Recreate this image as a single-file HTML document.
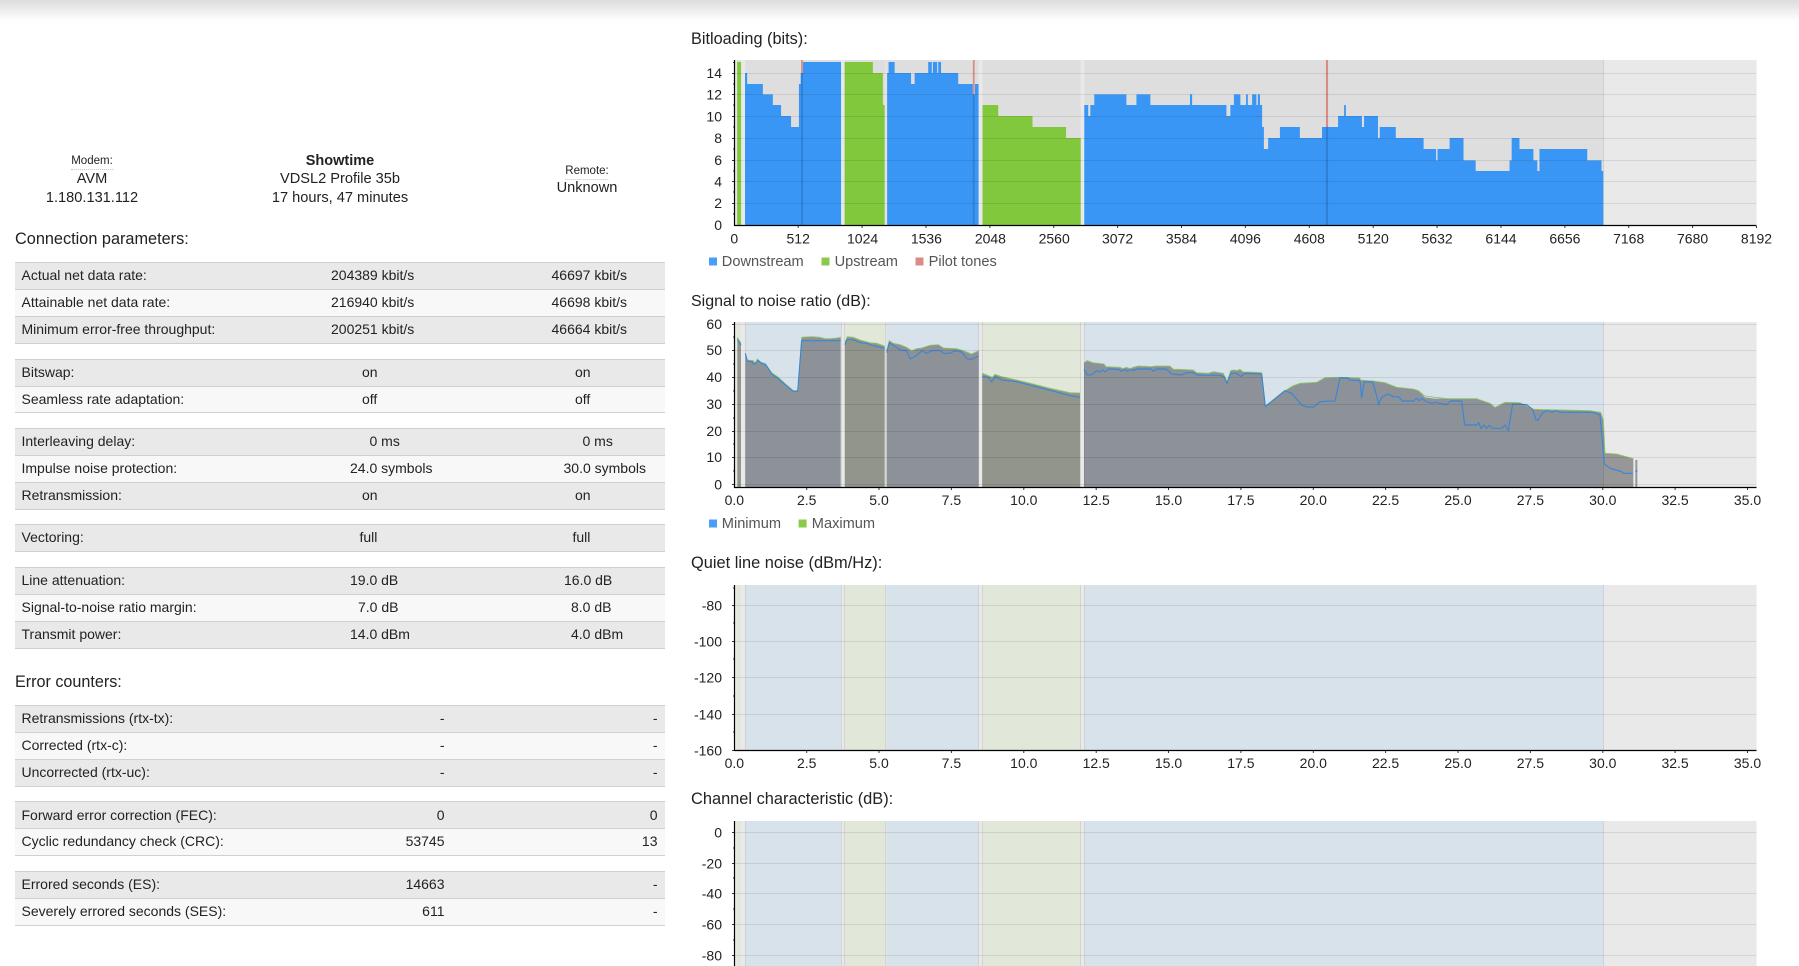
<!DOCTYPE html>
<html><head><meta charset="utf-8"><title>DSL</title>
<style>
html,body{margin:0;padding:0;background:#fff;width:1799px;height:966px;overflow:hidden}
body{position:relative;font-family:"Liberation Sans",sans-serif;color:#222;font-size:14px}
#top{position:absolute;left:0;top:0;width:1799px;height:21px;background:linear-gradient(#dcdcdc,#ffffff)}
.t{position:absolute;white-space:nowrap;transform:translateX(-50%);line-height:18px}
.h{position:absolute;left:15px;font-size:16.3px;line-height:20px;white-space:nowrap}
.r{position:absolute;left:15px;width:650px;height:28px;box-sizing:border-box;border-top:1px solid #d0d0d0;border-bottom:1px solid #d0d0d0;line-height:25px;background:#f8f8f8}
.o{background:#e9e9e9}
.r span{position:absolute;top:0;white-space:nowrap}
.r .a{left:6.5px}
.p{right:220.5px}.q{right:7.5px}
svg{position:absolute;left:0;top:0}
svg text{font-family:"Liberation Sans",sans-serif;font-size:14px;fill:#222}
.l text{font-size:14.6px;fill:#555}
.m{text-anchor:middle}.e{text-anchor:end}
.mx{fill:none;stroke:#8ec663;stroke-width:2.6}
.mn{fill:none;stroke:#3a86d6;stroke-width:3.4}
</style></head><body>
<div id="top"></div>
<div class="t" style="left:92px;top:154px;font-size:11.5px;border-bottom:1px dotted #c4c4c4;line-height:15px">Modem:</div>
<div class="t" style="left:92px;top:170px;font-size:14.6px">AVM</div>
<div class="t" style="left:92px;top:189px;font-size:14.6px">1.180.131.112</div>
<div class="t" style="left:340px;top:152px;font-size:14.5px;font-weight:bold">Showtime</div>
<div class="t" style="left:340px;top:170px;font-size:14.6px">VDSL2 Profile 35b</div>
<div class="t" style="left:340px;top:189px;font-size:14.6px">17 hours, 47 minutes</div>
<div class="t" style="left:587px;top:164px;font-size:11.5px;border-bottom:1px dotted #c4c4c4;line-height:15px">Remote:</div>
<div class="t" style="left:587px;top:179px;font-size:14.6px">Unknown</div>
<div class="h" style="top:229px">Connection parameters:</div>

<div class="r o" style="top:262px"><span class="a">Actual net data rate:</span><span style="left:316px">204389 kbit/s</span><span style="left:536.5px">46697 kbit/s</span></div>
<div class="r" style="top:289px"><span class="a">Attainable net data rate:</span><span style="left:316px">216940 kbit/s</span><span style="left:536.5px">46698 kbit/s</span></div>
<div class="r o" style="top:316px"><span class="a">Minimum error-free throughput:</span><span style="left:316px">200251 kbit/s</span><span style="left:536.5px">46664 kbit/s</span></div>

<div class="r o" style="top:359px"><span class="a">Bitswap:</span><span style="left:347px">on</span><span style="left:560px">on</span></div>
<div class="r" style="top:386px;height:27px"><span class="a">Seamless rate adaptation:</span><span style="left:347px">off</span><span style="left:560px">off</span></div>

<div class="r o" style="top:428px"><span class="a">Interleaving delay:</span><span style="left:354.5px">0 ms</span><span style="left:567.5px">0 ms</span></div>
<div class="r" style="top:455px"><span class="a">Impulse noise protection:</span><span style="left:335px">24.0 symbols</span><span style="left:548.5px">30.0 symbols</span></div>
<div class="r o" style="top:482px"><span class="a">Retransmission:</span><span style="left:347px">on</span><span style="left:560px">on</span></div>

<div class="r o" style="top:524px"><span class="a">Vectoring:</span><span style="left:344.5px">full</span><span style="left:557.5px">full</span></div>

<div class="r o" style="top:567px"><span class="a">Line attenuation:</span><span style="left:335px">19.0 dB</span><span style="left:549px">16.0 dB</span></div>
<div class="r" style="top:594px"><span class="a">Signal-to-noise ratio margin:</span><span style="left:343px">7.0 dB</span><span style="left:556px">8.0 dB</span></div>
<div class="r o" style="top:621px"><span class="a">Transmit power:</span><span style="left:335px">14.0 dBm</span><span style="left:556px">4.0 dBm</span></div>

<div class="h" style="top:672px;font-size:16.15px">Error counters:</div>

<div class="r o" style="top:705px"><span class="a">Retransmissions (rtx-tx):</span><span class="p">-</span><span class="q">-</span></div>
<div class="r" style="top:732px"><span class="a">Corrected (rtx-c):</span><span class="p">-</span><span class="q">-</span></div>
<div class="r o" style="top:759px"><span class="a">Uncorrected (rtx-uc):</span><span class="p">-</span><span class="q">-</span></div>

<div class="r o" style="top:801px;line-height:26px"><span class="a">Forward error correction (FEC):</span><span class="p">0</span><span class="q">0</span></div>
<div class="r" style="top:828px"><span class="a">Cyclic redundancy check (CRC):</span><span class="p">53745</span><span class="q">13</span></div>

<div class="r o" style="top:871px"><span class="a">Errored seconds (ES):</span><span class="p">14663</span><span class="q">-</span></div>
<div class="r" style="top:898px"><span class="a">Severely errored seconds (SES):</span><span class="p">611</span><span class="q">-</span></div>

<svg width="1799" height="966" viewBox="0 0 1799 966" xmlns="http://www.w3.org/2000/svg">
<defs>
<g id="bands">
<rect x="737.1" y="0" width="3.6" height="1" fill="#e1e7d9"/>
<rect x="745.4" y="0" width="95.7" height="1" fill="#d8e2eb"/>
<rect x="844.3" y="0" width="41.1" height="1" fill="#e1e7d9"/>
<rect x="886.4" y="0" width="92.2" height="1" fill="#d8e2eb"/>
<rect x="982.5" y="0" width="98.2" height="1" fill="#e1e7d9"/>
<rect x="1084.3" y="0" width="519.3" height="1" fill="#d8e2eb"/>
<g fill="#000" fill-opacity=".08">
<rect x="745" y="0" width="1" height="1"/><rect x="841" y="0" width="1" height="1"/><rect x="844" y="0" width="1" height="1"/><rect x="885" y="0" width="1" height="1"/><rect x="978" y="0" width="1" height="1"/><rect x="982" y="0" width="1" height="1"/><rect x="1080" y="0" width="1" height="1"/><rect x="1084" y="0" width="1" height="1"/><rect x="1603" y="0" width="1" height="1"/>
</g>
</g>
<g id="grey">
<rect x="737.1" y="0" width="3.6" height="1"/>
<rect x="745.4" y="0" width="95.7" height="1"/>
<rect x="844.3" y="0" width="41.1" height="1"/>
<rect x="886.4" y="0" width="92.2" height="1"/>
<rect x="982.5" y="0" width="98.2" height="1"/>
<rect x="1084.3" y="0" width="519.3" height="1"/>
</g>
</defs>

<!-- BITLOADING -->
<text x="691" y="44" style="font-size:16.3px">Bitloading (bits):</text>
<rect x="734" y="60" width="1022.6" height="165" fill="#e9e9e9"/>
<use href="#grey" transform="translate(0,60) scale(1,165)" fill="#dedede"/>
<rect x="1603" y="60" width="1" height="165" fill="#d0d0d0"/>
<g transform="translate(680,0) scale(.35714,.33333)" fill="#3a96f5">
<path fill="#82c83c" d="M160,676V186H171V676Z"/>
<path d="M182,676V219H188V252H232V283H260V315H283V348H311V381H333V252H338V219H344V186H451V676Z"/>
<path fill="#82c83c" d="M461,676V186H540V219H568V315H573V676Z"/>
<path d="M580,676V219H584V186H601V219H647V252H657V219H695V186H705V219H708V186H720V219H723V186H731V219H779V252H820V283H826V252H836V676Z"/>
<path fill="#82c83c" d="M847,676V315H891V348H987V381H1081V414H1122V676Z"/>
<path d="M1132,676V315H1143V348H1149V315H1160V283H1250V315H1278V283H1317V315H1428V283H1434V315H1530V348H1541V315H1551V283H1569V676Z"/>
<rect x="339" y="180" width="5" height="39" fill="#d98c85"/>
<rect x="339" y="219" width="5" height="457" fill="#2f7fd6"/>
<rect x="820" y="180" width="5" height="103" fill="#d98c85"/>
<rect x="820" y="283" width="5" height="393" fill="#2f7fd6"/>
</g>
<g transform="translate(1240,0) scale(.35651,.33333)" fill="#3a96f5">
<path d="M-1,676V315H17V283H22V315H34V283H46V315H50V283H56V315H62V381H67V447H79V414H112V381H168V414H230V381H275V348H292V315H297V348H342V381H348V348H387V414H392V381H437V414H515V447H550V481H554V447H588V414H627V481H661V513H756V481H762V414H784V447H823V481H834V513H840V447H974V481H1014V513H1019V676Z"/>
<rect x="241" y="180" width="6" height="201" fill="#d98c85"/>
<rect x="241" y="381" width="6" height="295" fill="#2f7fd6"/>
</g>
<g stroke="#000" stroke-opacity=".09" stroke-width="1">
<path d="M734 73.5H1756.5M734 94.5H1756.5M734 116.5H1756.5M734 138.5H1756.5M734 160.5H1756.5M734 181.5H1756.5M734 203.5H1756.5"/>
</g>
<path d="M734.5 60V226M734 225.5H1756.5" stroke="#000" stroke-width="1.2" fill="none"/>
<path stroke="#333" fill="none" d="M732 73.5h2M732 94.5h2M732 116.5h2M732 138.5h2M732 160.5h2M732 181.5h2M732 203.5h2M733 62.5h1M733 84h1M733 105h1M733 127h1M733 149h1M733 171h1M733 192h1M733 214h1M798.2 226v2M862.1 226v2M926 226v2M989.9 226v2M1053.7 226v2M1117.6 226v2M1181.5 226v2M1245.4 226v2M1309.3 226v2M1373.2 226v2M1437.1 226v2M1501 226v2M1564.9 226v2M1628.7 226v2M1692.6 226v2M1756.5 226v2"/>
<text class="e" x="722" y="78">14</text><text class="e" x="722" y="99.5">12</text><text class="e" x="722" y="121.5">10</text><text class="e" x="722" y="143">8</text><text class="e" x="722" y="165">6</text><text class="e" x="722" y="186.5">4</text><text class="e" x="722" y="208">2</text><text class="e" x="722" y="230">0</text>
<text class="m" x="734.3" y="243.5">0</text><text class="m" x="798.2" y="243.5">512</text><text class="m" x="862.6" y="243.5">1024</text><text class="m" x="926.4" y="243.5">1536</text><text class="m" x="990.4" y="243.5">2048</text><text class="m" x="1054.2" y="243.5">2560</text><text class="m" x="1117.6" y="243.5">3072</text><text class="m" x="1181.5" y="243.5">3584</text><text class="m" x="1245.4" y="243.5">4096</text><text class="m" x="1309.3" y="243.5">4608</text><text class="m" x="1373.2" y="243.5">5120</text><text class="m" x="1437.1" y="243.5">5632</text><text class="m" x="1501" y="243.5">6144</text><text class="m" x="1564.9" y="243.5">6656</text><text class="m" x="1628.7" y="243.5">7168</text><text class="m" x="1692.6" y="243.5">7680</text><text class="m" x="1756.5" y="243.5">8192</text>
<g class="l">
<rect x="709" y="257.5" width="8" height="8" fill="#4a9ff5"/><text x="721.8" y="266">Downstream</text>
<rect x="821.5" y="257.5" width="8" height="8" fill="#8cc84b"/><text x="834.6" y="266">Upstream</text>
<rect x="915.5" y="257.5" width="8" height="8" fill="#d98c85"/><text x="928.6" y="266">Pilot tones</text>
</g>

<!-- SNR -->
<text x="691" y="306" style="font-size:16px">Signal to noise ratio (dB):</text>
<rect x="734" y="322" width="1022.6" height="165.3" fill="#e9e9e9"/>
<use href="#bands" transform="translate(0,322) scale(1,165.3)"/>
<g opacity=".35" fill="#000">
<g transform="translate(730,330) scale(.33333)">
<path d="M22,472V22L33,40V472Z"/>
<path d="M46,472V70L52,90L70,92L75,100L82,87L92,97L105,100L125,128L145,142L170,165L190,182L204,182L215,22L245,20L270,22L285,26L300,26L320,24L332,22V472Z"/>
<path d="M345,472V36L352,20L370,22L390,30L420,38L440,40L464,48V472Z"/>
<path d="M470,472V62L478,32L490,40L510,44L530,52L545,62L560,56L575,54L600,46L625,44L640,54L680,56L700,62L725,72L746,62V472Z"/>
<path d="M757,472V130L775,137L787,142L795,133L815,140L860,150L910,162L960,175L1020,188L1050,189V472Z"/>
</g>
<g transform="translate(1080,350) scale(.33333)">
<path d="M12,412V38L22,32L38,38L72,42L78,50L120,52L128,56L140,52L150,56L160,52L175,48L215,50L225,48L270,48L280,58L300,58L340,60L350,68L385,70L400,65L430,70L437,85L442,95L452,62L462,60L470,62L480,58L490,66L510,66L545,68L556,168L610,125L640,107L660,100L710,97L735,83L780,82L841,84V412Z"/>
</g>
<g transform="translate(1360,370) scale(.33333)">
<path d="M0,352V30L40,33L75,38L110,52L160,57L175,62L195,82L225,86L265,86L350,86L390,100L405,112L435,97L480,98L520,118L690,122L722,127L730,150L735,250L770,252L820,266V352Z"/>
<path d="M826,352V270H832V352Z"/>
</g>
</g>
<g transform="translate(730,330) scale(.33333)">
<path class="mx" d="M22,22L33,40M46,70L52,90L70,92L75,100L82,87L92,97L105,100L125,128L145,142L170,165L190,182L204,182L215,22L245,20L270,22L285,26L300,26L320,24L332,22M345,36L352,20L370,22L390,30L420,38L440,40L464,48M470,62L478,32L490,40L510,44L530,52L545,62L560,56L575,54L600,46L625,44L640,54L680,56L700,62L725,72L746,62M757,130L775,137L787,142L795,133L815,140L860,150L910,162L960,175L1020,188L1050,189"/>
<path class="mn" d="M22,28L33,45M46,70L52,93L65,95L73,103L85,92L95,100L108,105L125,132L145,146L170,168L190,184L203,184L215,32H332M345,44L352,28L375,31L390,38L410,40L430,47L445,50L464,56M470,68L478,38L490,46L510,60L530,62L541,87L560,76L575,62L590,70L605,62L630,62L642,70L660,70L675,62L695,66L712,87L725,88L746,78M757,139L775,142L785,156L795,140L815,150L860,155L910,168L960,181L1020,197L1050,202"/>
</g>
<g transform="translate(1080,350) scale(.33333)">
<path class="mx" d="M12,38L22,32L38,38L72,42L78,50L120,52L128,56L140,52L150,56L160,52L175,48L215,50L225,48L270,48L280,58L300,58L340,60L350,68L385,70L400,65L430,70L437,85L442,95L452,62L462,60L470,62L480,58L490,66L510,66L545,68L556,168L610,125L640,107L660,100L710,97L735,83L780,82L841,84"/>
<path class="mn" d="M12,58L22,75L35,74L50,62L60,66L68,60L75,66L85,57L115,58L124,64L135,58L142,64L155,58L160,62L170,57L212,57L220,64L230,57L258,57L275,72L305,75L320,68L340,68L355,76L420,76L432,80L441,100L452,70L470,70L482,80L495,70L545,72L556,170L615,122L635,130L665,165L680,171L700,171L712,162L720,155L735,154L765,153L780,84L805,84L808,90L841,92"/>
</g>
<g transform="translate(1360,370) scale(.33333)">
<path class="mx" d="M0,30L40,33L75,38L110,52L160,57L175,62L195,78L225,82L265,86L350,86L390,100L405,112L435,97L480,98L520,118L690,122L722,127L730,150L735,250L770,252L820,266"/>
<path class="mn" d="M0,32L5,85L12,36L38,36L48,70L56,103L65,82L85,72L100,80L115,80L128,93L160,93L170,85L178,92L186,85L200,95L215,100L225,97L260,104L272,93L305,93L314,165L350,165L356,158L363,175L372,165L380,175L388,166L398,175L425,175L435,165L445,182L458,102L500,104L518,118L528,150L535,150L548,127L565,122L575,127L590,122L600,127L700,127L720,135L733,282L750,295L785,305L790,310L818,310M826,303H832"/>
</g>
<path stroke="#000" stroke-opacity=".09" fill="none" d="M734 324.5H1756.5M734 350.5H1756.5M734 377.5H1756.5M734 404.5H1756.5M734 431.5H1756.5M734 457.5H1756.5M734 484.5H1756.5"/>
<path d="M734.5 322V488M734 487.5H1756.5" stroke="#000" stroke-width="1.2" fill="none"/>
<path stroke="#333" fill="none" d="M732 324.5h2M732 350.5h2M732 377.5h2M732 404.5h2M732 431.5h2M732 457.5h2M732 484.5h2M733 337h1M733 364h1M733 391h1M733 418h1M733 444h1M733 471h1M806.7 488v2M879 488v2M951.4 488v2M1023.8 488v2M1096.2 488v2M1168.5 488v2M1240.9 488v2M1313.3 488v2M1385.6 488v2M1458 488v2M1530.4 488v2M1602.8 488v2M1675.1 488v2M1747.5 488v2"/>
<text class="e" x="722" y="329">60</text><text class="e" x="722" y="355">50</text><text class="e" x="722" y="382">40</text><text class="e" x="722" y="409">30</text><text class="e" x="722" y="436">20</text><text class="e" x="722" y="462">10</text><text class="e" x="722" y="489.5">0</text>
<text class="m" x="734.3" y="505">0.0</text><text class="m" x="806.7" y="505">2.5</text><text class="m" x="879" y="505">5.0</text><text class="m" x="951.4" y="505">7.5</text><text class="m" x="1023.8" y="505">10.0</text><text class="m" x="1096.2" y="505">12.5</text><text class="m" x="1168.5" y="505">15.0</text><text class="m" x="1240.9" y="505">17.5</text><text class="m" x="1313.3" y="505">20.0</text><text class="m" x="1385.6" y="505">22.5</text><text class="m" x="1458" y="505">25.0</text><text class="m" x="1530.4" y="505">27.5</text><text class="m" x="1602.8" y="505">30.0</text><text class="m" x="1675.1" y="505">32.5</text><text class="m" x="1747.5" y="505">35.0</text>
<g class="l">
<rect x="709" y="519.5" width="8" height="8" fill="#4a9ff5"/><text x="721.8" y="528">Minimum</text>
<rect x="798.6" y="519.5" width="8" height="8" fill="#8cc84b"/><text x="811.8" y="528">Maximum</text>
</g>

<!-- QLN -->
<text x="691" y="568" style="font-size:16.4px">Quiet line noise (dBm/Hz):</text>
<rect x="734" y="585" width="1022.6" height="165.3" fill="#e9e9e9"/>
<use href="#bands" transform="translate(0,585) scale(1,165.3)"/>
<path stroke="#000" stroke-opacity=".09" fill="none" d="M734 605.5H1756.5M734 641.5H1756.5M734 677.5H1756.5M734 714.5H1756.5"/>
<path d="M734.5 585V751M734 750.5H1756.5" stroke="#000" stroke-width="1.2" fill="none"/>
<path stroke="#333" fill="none" d="M732 605.5h2M732 641.5h2M732 677.5h2M732 714.5h2M732 750.5h2M733 623h1M733 659h1M733 696h1M733 732h1M733 588h1M806.7 751v2M879 751v2M951.4 751v2M1023.8 751v2M1096.2 751v2M1168.5 751v2M1240.9 751v2M1313.3 751v2M1385.6 751v2M1458 751v2M1530.4 751v2M1602.8 751v2M1675.1 751v2M1747.5 751v2"/>
<text class="e" x="722" y="610.5">-80</text><text class="e" x="722" y="646.5">-100</text><text class="e" x="722" y="682.5">-120</text><text class="e" x="722" y="719.5">-140</text><text class="e" x="722" y="755.5">-160</text>
<text class="m" x="734.3" y="768">0.0</text><text class="m" x="806.7" y="768">2.5</text><text class="m" x="879" y="768">5.0</text><text class="m" x="951.4" y="768">7.5</text><text class="m" x="1023.8" y="768">10.0</text><text class="m" x="1096.2" y="768">12.5</text><text class="m" x="1168.5" y="768">15.0</text><text class="m" x="1240.9" y="768">17.5</text><text class="m" x="1313.3" y="768">20.0</text><text class="m" x="1385.6" y="768">22.5</text><text class="m" x="1458" y="768">25.0</text><text class="m" x="1530.4" y="768">27.5</text><text class="m" x="1602.8" y="768">30.0</text><text class="m" x="1675.1" y="768">32.5</text><text class="m" x="1747.5" y="768">35.0</text>

<!-- CHANNEL -->
<text x="691" y="804" style="font-size:16.4px">Channel characteristic (dB):</text>
<rect x="734" y="821" width="1022.6" height="145" fill="#e9e9e9"/>
<use href="#bands" transform="translate(0,821) scale(1,145)"/>
<path stroke="#000" stroke-opacity=".09" fill="none" d="M734 832.5H1756.5M734 863.5H1756.5M734 893.5H1756.5M734 924.5H1756.5M734 955.5H1756.5"/>
<path d="M734.5 821V966" stroke="#000" stroke-width="1.2" fill="none"/>
<path stroke="#333" fill="none" d="M732 832.5h2M732 863.5h2M732 893.5h2M732 924.5h2M732 955.5h2M733 848h1M733 878h1M733 909h1M733 940h1"/>
<text class="e" x="722" y="837.5">0</text><text class="e" x="722" y="868.5">-20</text><text class="e" x="722" y="898.5">-40</text><text class="e" x="722" y="929.5">-60</text><text class="e" x="722" y="960.5">-80</text>
</svg>
</body></html>
